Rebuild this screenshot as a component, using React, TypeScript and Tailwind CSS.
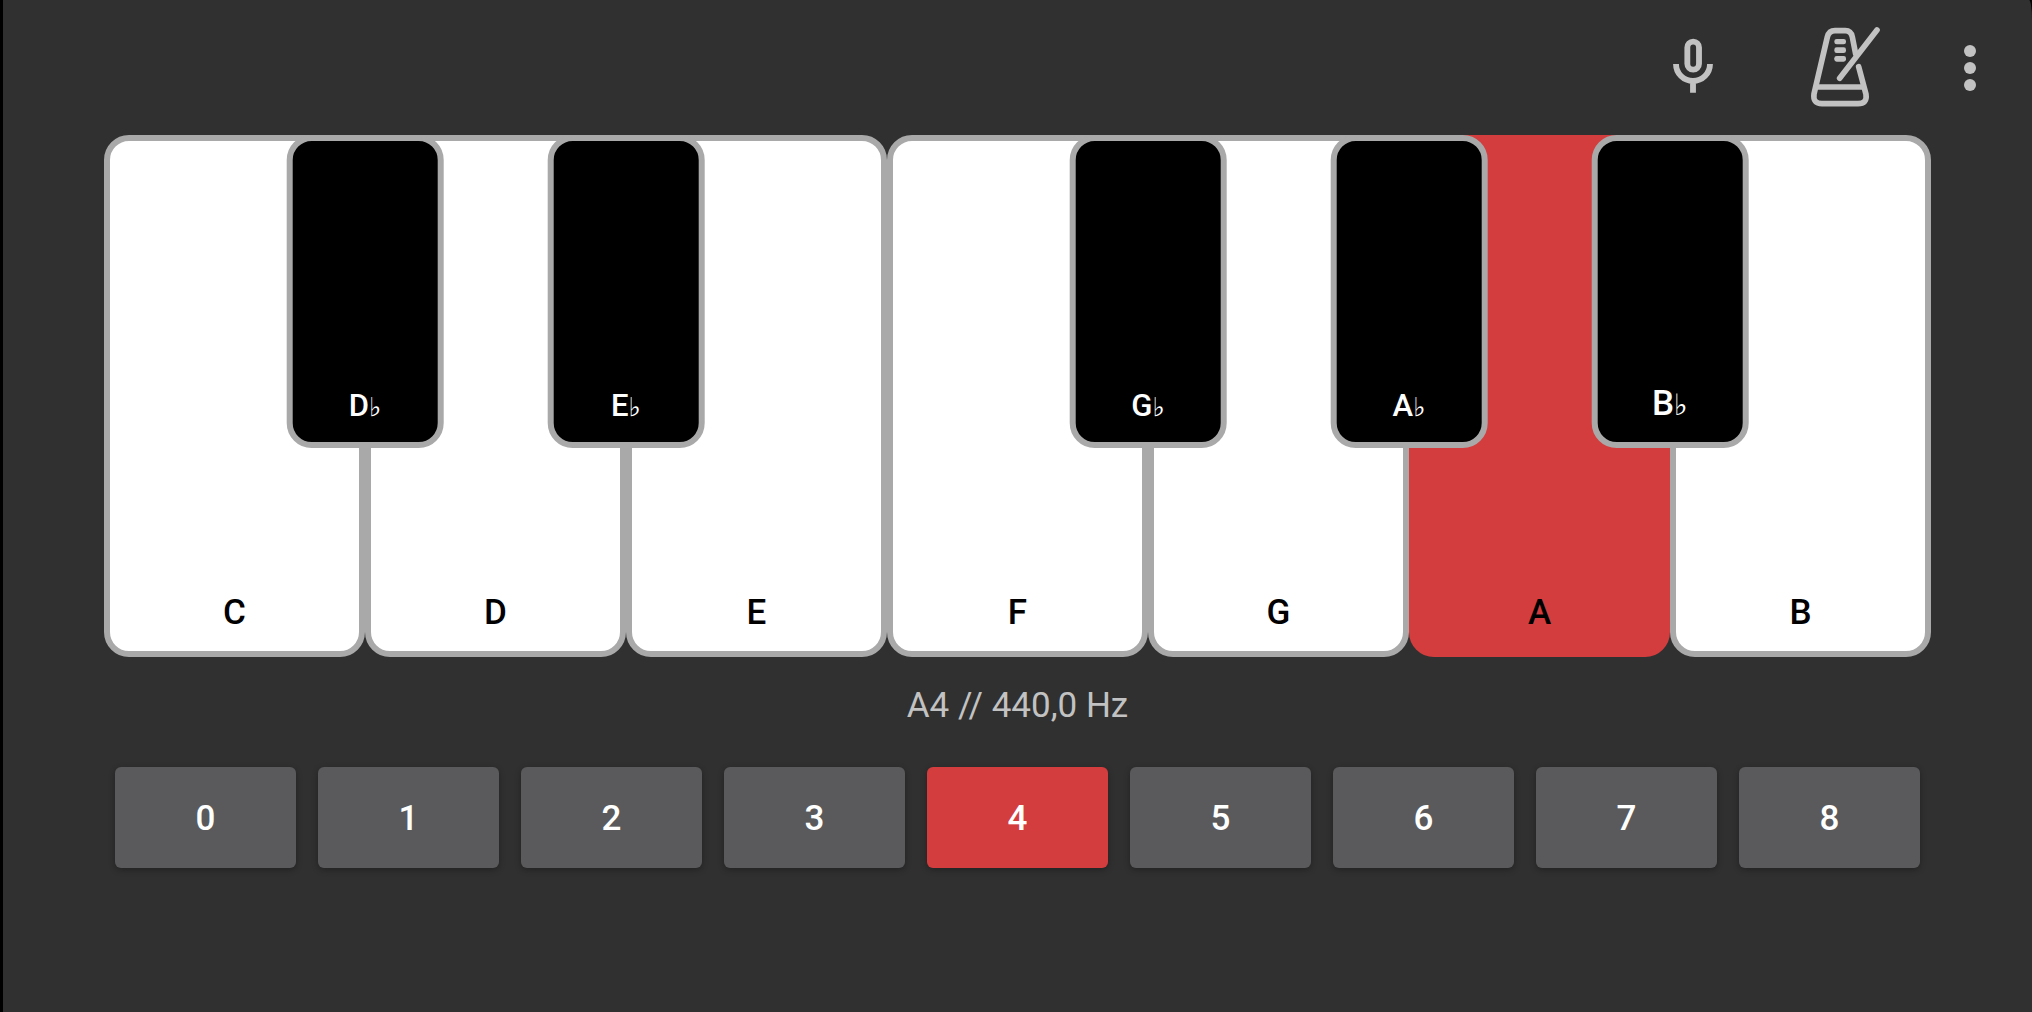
import { useState } from "react";

type BlackKey = { note: string; large?: boolean };
type Key = { note: string; black?: BlackKey };

const KEYS: Key[] = [
  { note: "C", black: { note: "D" } },
  { note: "D", black: { note: "E" } },
  { note: "E" },
  { note: "F", black: { note: "G" } },
  { note: "G", black: { note: "A" } },
  { note: "A", black: { note: "B", large: true } },
  { note: "B" },
];

const OCTAVES = [0, 1, 2, 3, 4, 5, 6, 7, 8];

function MicIcon() {
  return (
    <svg viewBox="96 111 126 183" className="h-[61px] w-[42px]" fill="none" stroke="currentColor" strokeWidth="17.5" aria-hidden="true">
      <rect x="142" y="125" width="35" height="84" rx="17.5" />
      <path d="M108 192a51 51 0 0 0 102 0M159 243v35" />
    </svg>
  );
}

function MetronomeIcon() {
  return (
    <svg viewBox="510 78 213 249" className="h-[83px] w-[71px]" fill="none" stroke="currentColor" strokeWidth="17" strokeLinecap="round" strokeLinejoin="round" aria-hidden="true">
      <path d="M647 162L637 111Q633 92 616 92H585Q567 92 562 111L522 282Q518 311 546 311H654Q682 311 678 283L656 200" />
      <path d="M530 261H670" strokeLinecap="butt" />
      <path d="M599 235L711 90" />
      <g fill="currentColor" stroke="none">
        <rect x="583" y="117" width="35" height="16" rx="7" />
        <rect x="583" y="142" width="35" height="17" rx="7" />
        <rect x="583" y="168" width="35" height="17" rx="7" />
      </g>
    </svg>
  );
}

function MoreIcon() {
  return (
    <svg viewBox="969 132 42 141" className="h-[47px] w-[14px] overflow-visible" fill="currentColor" aria-hidden="true">
      <circle cx="990" cy="153" r="18" />
      <circle cx="990" cy="204" r="18" />
      <circle cx="990" cy="255" r="18" />
    </svg>
  );
}

function PianoKey({ item, active, onPress }: { item: Key; active: string; onPress: (n: string) => void }) {
  const { note, black } = item;
  const blackName = black ? black.note + "♭" : "";
  return (
    <li className="relative flex-1">
      <button
        type="button"
        aria-pressed={active === note}
        onClick={() => onPress(note)}
        className={`flex size-full items-end justify-center rounded-[25px] border-6 pb-[18px] text-[35px] leading-10 font-medium text-black ${
          active === note ? "border-[#d43d3e] bg-[#d43d3e]" : "border-[#a9a9a9] bg-white"
        }`}
      >
        {note}
      </button>
      {black && (
        <button
          type="button"
          aria-pressed={active === blackName}
          onClick={() => onPress(blackName)}
          className={`absolute top-0 left-full z-10 flex h-3/5 w-3/5 -translate-x-1/2 items-end justify-center rounded-[25px] border-6 border-[#a9a9a9] leading-10 font-medium text-white ${
            active === blackName ? "bg-[#d43d3e]" : "bg-black"
          } ${black.large ? "pb-[18px] text-[35px]" : "pb-4 text-[31px]"}`}
        >
          <span>
            {black.note}
            <span className="font-['DejaVu_Sans',sans-serif] text-[0.84em] leading-none font-normal">♭</span>
          </span>
        </button>
      )}
    </li>
  );
}

export default function App() {
  const [note, setNote] = useState("A");
  const [octave, setOctave] = useState(4);

  return (
    <div className="min-h-screen bg-black pl-[3px] font-[Roboto,sans-serif]">
      <main className="min-h-screen rounded-tr-[3px_20px] bg-[#303030] pb-8">
        <header className="flex h-[135px] items-center justify-end pr-[55px] text-[#c2c2c2]">
          <button type="button" aria-label="Microphone" className="mr-24">
            <MicIcon />
          </button>
          <button type="button" aria-label="Metronome" className="mr-[82px]">
            <MetronomeIcon />
          </button>
          <button type="button" aria-label="More options">
            <MoreIcon />
          </button>
        </header>

        <div className="px-[101px]">
          <ul className="flex aspect-[7/2]" aria-label="Keyboard">
            {KEYS.map((item) => (
              <PianoKey key={item.note} item={item} active={note} onPress={setNote} />
            ))}
          </ul>

          <p className="pt-[29px] pb-[41px] text-center text-[35px] leading-10 text-[#c2c2c2]">A4 // 440,0 Hz</p>

          <div className="grid grid-cols-9 gap-[22px] px-[11px]" role="group" aria-label="Octave">
            {OCTAVES.map((n) => (
              <button
                key={n}
                type="button"
                aria-pressed={octave === n}
                onClick={() => setOctave(n)}
                className={`h-[101px] rounded-md pt-[3px] text-[35px] leading-10 font-medium text-white shadow-[0_2px_6px_rgba(0,0,0,0.3)] ${
                  octave === n ? "bg-[#d43d3e]" : "bg-[#5a5a5c]"
                }`}
              >
                {n}
              </button>
            ))}
          </div>
        </div>
      </main>
    </div>
  );
}
